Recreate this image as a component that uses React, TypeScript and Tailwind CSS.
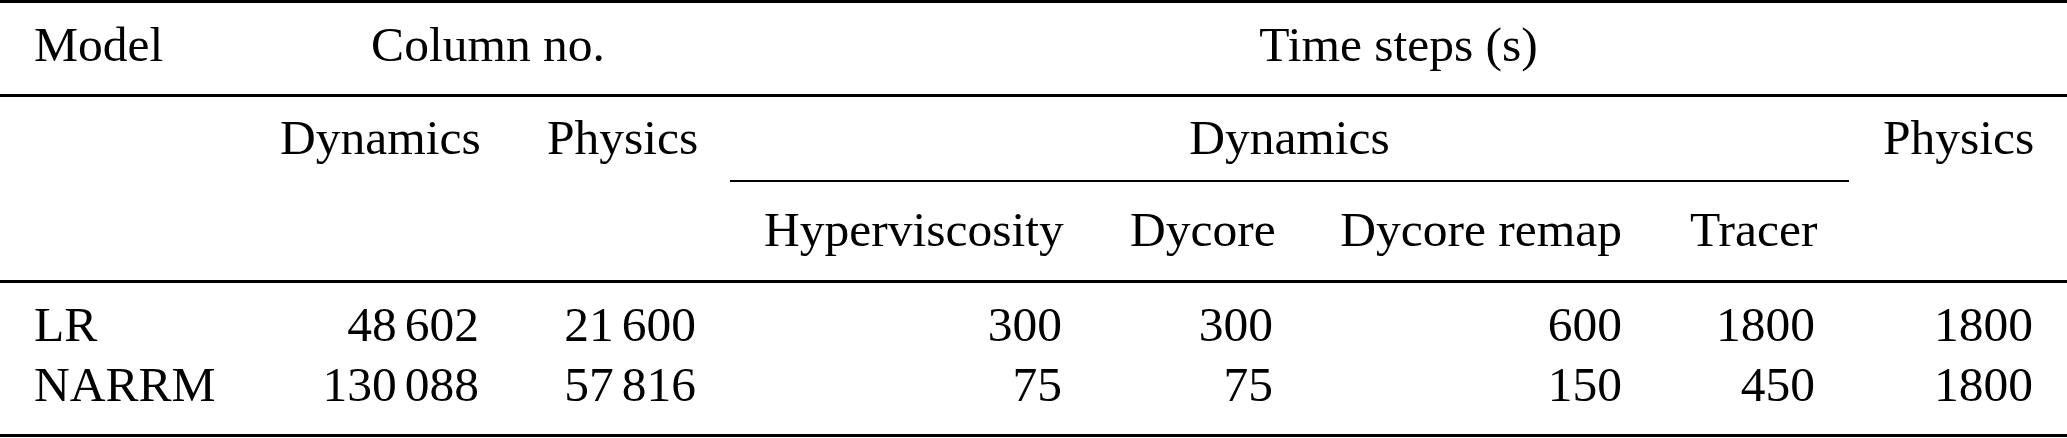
const cols =
  "grid grid-cols-[246px_267px_217px_366px_211px_349px_193px_218px] whitespace-nowrap";

const Num = ({ hi, lo }: { hi?: string; lo: string }) => (
  <>
    {hi && <span>{hi}</span>}
    {hi && <span className="inline-block w-[8px]" />}
    <span>{lo}</span>
  </>
);

const rows = [
  { model: "LR", dyn: ["48", "602"], phys: ["21", "600"], steps: ["300", "300", "600", "1800", "1800"] },
  { model: "NARRM", dyn: ["130", "088"], phys: ["57", "816"], steps: ["75", "75", "150", "450", "1800"] },
];

export default function App() {
  return (
    <div className="w-[2067px] h-[438px] bg-white text-black font-['Liberation_Serif',serif] text-[49.5px] leading-[60px]">
      <div className={cols}>
        {/* top rule */}
        <div className="col-span-8 h-[3px] bg-black" />

        {/* row 1 */}
        <div className="px-[34px] pt-[12px] pb-[19px] text-left">Model</div>
        <div className="col-span-2 px-[34px] pt-[12px] pb-[19px] text-center">Column no.</div>
        <div className="col-span-5 px-[34px] pt-[12px] pb-[19px] text-center">Time steps (s)</div>

        <div className="col-span-8 h-[3px] bg-black" />

        {/* row 2 */}
        <div />
        <div className="px-[34px] pt-[11px] text-right">Dynamics</div>
        <div className="px-[34px] pt-[11px] text-right">Physics</div>
        <div className="col-span-4 pt-[11px]">
          <div className="px-[34px] pb-[12px] text-center border-b-2 border-black">Dynamics</div>
        </div>
        <div className="px-[34px] pt-[11px] text-right">Physics</div>

        {/* row 3 */}
        <div className="col-span-3" />
        <div className="px-[34px] pt-[18px] pb-[20px] text-right">Hyperviscosity</div>
        <div className="px-[34px] pt-[18px] pb-[20px] text-right">Dycore</div>
        <div className="pl-[30px] pr-[34px] pt-[18px] pb-[20px] text-right">Dycore remap</div>
        <div className="px-[34px] pt-[18px] pb-[20px] text-right">Tracer</div>
        <div />

        <div className="col-span-8 h-[3px] bg-black" />

        {/* body */}
        {rows.map((r, i) => {
          const pad = i === 0 ? "pt-[12px]" : "pb-[19px]";
          return (
            <div key={r.model} className="contents">
              <div className={`px-[34px] text-left ${pad}`}>{r.model}</div>
              <div className={`px-[34px] text-right ${pad}`}>
                <Num hi={r.dyn[0]} lo={r.dyn[1]} />
              </div>
              <div className={`px-[34px] text-right ${pad}`}>
                <Num hi={r.phys[0]} lo={r.phys[1]} />
              </div>
              {r.steps.map((s, j) => (
                <div key={j} className={`px-[34px] text-right ${pad}`}>
                  {s}
                </div>
              ))}
            </div>
          );
        })}

        <div className="col-span-8 h-[3px] bg-black" />
      </div>
    </div>
  );
}
